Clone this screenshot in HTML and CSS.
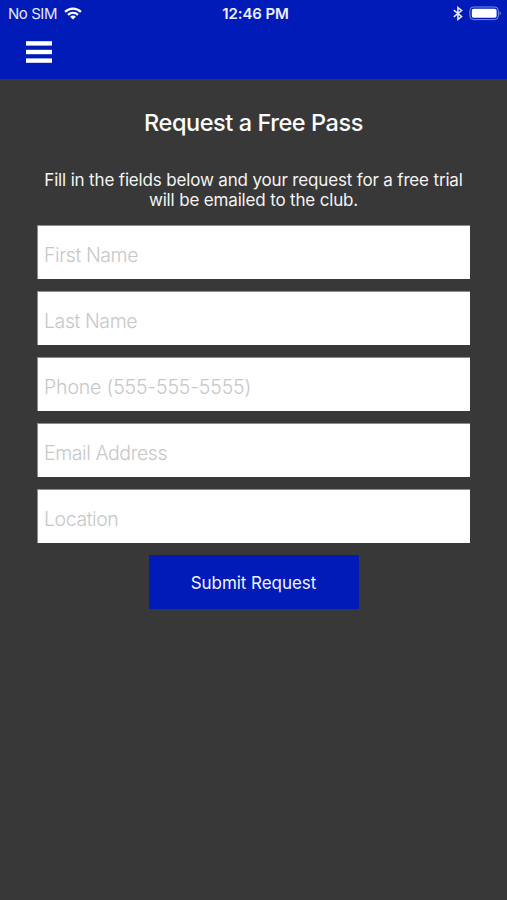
FILE: index.html
```html
<!DOCTYPE html>
<html lang="en">
<head>
<meta charset="utf-8">
<title>Request a Free Pass</title>
<link rel="stylesheet" href="styles.css">
</head>
<body>
<header class="header">
  <div class="status">
    <div class="status-left">
      <span class="carrier">No SIM</span>
      <svg class="wifi" width="18" height="13" viewBox="0 0 18 13" fill="none" stroke="#fff" stroke-width="2.3">
        <path d="M1.1 4.8C5.6.5 12.4.5 16.9 4.8"/>
        <path d="M4 7.8c2.9-2.7 7.1-2.7 10 0"/>
        <path d="M9 12.6 6.1 9.7c1.7-1.5 4.1-1.5 5.8 0z" fill="#fff" stroke="none"/>
      </svg>
    </div>
    <span class="clock">12:46 PM</span>
    <div class="status-right">
      <svg width="10" height="15" viewBox="0 0 10 15" fill="none" stroke="#e9ecff" stroke-width="1.5">
        <path d="M.8 4.2 8.6 10.5 4.9 13.4V1.6l3.7 2.9L.8 10.8"/>
      </svg>
      <svg width="33" height="15" viewBox="0 0 33 15">
        <rect x=".9" y="1" width="28.4" height="12.6" rx="3.6" fill="none" stroke="#7f91e8" stroke-width="1"/>
        <rect x="2.8" y="2.8" width="24.8" height="9" rx="1.8" fill="#fff"/>
        <path d="M30.6 5.3c1.6.8 1.6 3.2 0 4z" fill="#7f91e8"/>
      </svg>
    </div>
  </div>
  <button class="menu" aria-label="Menu">
    <svg width="27" height="22" viewBox="0 0 27 22" fill="#fff">
      <rect x="0" y=".2" width="26" height="4.4"/>
      <rect x="0" y="8.8" width="26" height="4.4"/>
      <rect x="0" y="17.4" width="26" height="4.4"/>
    </svg>
  </button>
</header>
<main class="content">
  <h1 class="title">Request a Free Pass</h1>
  <p class="intro">Fill in the fields below and your request for a free trial<br>will be emailed to the club.</p>
  <form class="form">
    <input class="field" type="text" placeholder="First Name">
    <input class="field" type="text" placeholder="Last Name">
    <input class="field phone" type="tel" placeholder="Phone (555-555-5555)">
    <input class="field" type="email" placeholder="Email Address">
    <input class="field" type="text" placeholder="Location">
    <button class="submit" type="button">Submit Request</button>
  </form>
</main>
</body>
</html>
```
FILE: styles.css
```css
* { box-sizing: border-box; }
body {
  margin: 0;
  min-height: 900px;
  background: #383838;
  color: #fff;
  font-family: Inter, "Liberation Sans", sans-serif;
}
.header {
  height: 79px;
  background: #001bb7;
}
.status {
  display: grid;
  grid-template-columns: 1fr auto 1fr;
  align-items: center;
  height: 27px;
  padding: 0 5px 0 8px;
}
.status-left, .status-right { display: flex; align-items: center; }
.status-left { gap: 7px; }
.status-right { justify-content: flex-end; gap: 6px; }
.carrier { font-size: 15px; line-height: 27px; letter-spacing: -0.45px; color: #e4e8ff; }
.clock {
  padding-left: 1px;
  font-size: 15px;
  font-weight: 600;
  line-height: 27px;
  letter-spacing: -0.1px;
  color: #eef0ff;
}
.menu {
  display: flex;
  margin: 14px 0 0 26px;
  padding: 0;
  border: 0;
  background: none;
}
.content { padding: 0 37px; }
.title {
  margin: 0;
  padding-top: 29px;
  font-size: 23.5px;
  line-height: 30px;
  font-weight: 500;
  letter-spacing: -0.43px;
  text-align: center;
}
.intro {
  margin: 32px -20px 0;
  font-size: 17px;
  line-height: 20px;
  letter-spacing: -0.16px;
  text-align: center;
  color: #f4f4f4;
}
.form {
  display: flex;
  flex-direction: column;
  align-items: center;
  gap: 12px;
  margin-top: 15px;
}
.field {
  width: 433px;
  height: 54px;
  padding: 4px 6px 0;
  border: 0 solid #8c8c8c;
  border-width: 1px 0 0 1px;
  border-radius: 0;
  background: #fff;
  font: 300 19.5px Inter, "Liberation Sans", sans-serif;
  letter-spacing: -0.42px;
  color: #333;
}
.phone { letter-spacing: -0.17px; }
.field::placeholder { color: #c7c7c9; opacity: 1; }
.submit {
  width: 210px;
  height: 54px;
  padding: 1px 0 0;
  border: 0;
  background: #001bb7;
  color: #f0f2ff;
  font: 400 17px Inter, "Liberation Sans", sans-serif;
  letter-spacing: -0.05px;
}
```
